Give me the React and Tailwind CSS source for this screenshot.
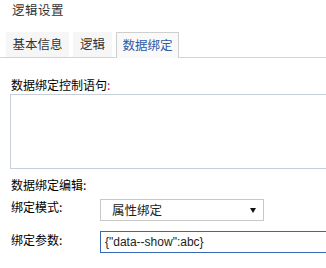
import React from "react";

const cjk = { fontFamily: '"Noto Sans CJK SC", "Noto Sans", sans-serif' };

export default function App() {
  return (
    <div className="w-[326px] h-[268px] bg-white overflow-hidden text-[#222]" style={cjk}>
      <div className="h-[32px] pl-[12px] pt-[1px] text-[12.5px] leading-[18px] text-[#333] tracking-[0.5px]">
        逻辑设置
      </div>
      <div className="flex items-end h-[26px] border-b border-[#d4d4d4] pl-[6px] gap-[4px]">
        <div className="w-[63px] h-[25px] bg-[#f6f6f6] flex items-center justify-center text-[12.5px] text-[#333]">
          基本信息
        </div>
        <div className="w-[39px] h-[25px] bg-[#f6f6f6] flex items-center justify-center text-[12.5px] text-[#333]">
          逻辑
        </div>
        <div className="w-[63px] h-[26px] -mb-px bg-[#f9f9f9] border border-b-0 border-[#cfcfcf] flex items-center justify-center text-[12.5px] text-[#2d5aa6]">
          数据绑定
        </div>
      </div>
      <div className="pl-[10px]">
        <div className="mt-[20px] h-[16px] pl-[1px] text-[12px] leading-[14px] text-black">
          数据绑定控制语句<span className="text-[#c0107a]">:</span>
        </div>
        <div className="w-[330px] h-[75px] border border-[#c9cfd6] bg-white" />
        <div className="mt-[9px] h-[14px] pl-[1px] text-[12px] leading-[14px] text-black">
          数据绑定编辑:
        </div>
        <div className="mt-[7px] flex items-start">
          <div className="w-[90px] shrink-0 pl-[1px] pt-[1px] text-[12px] leading-[14px] text-black">绑定模式:</div>
          <div className="w-[164px] shrink-0 h-[22px] border border-[#c8c8c8] bg-white flex items-center pl-[11px] pr-[7px] text-[12.5px] text-[#222]">
            <span className="flex-1">属性绑定</span>
            <svg width="6" height="5" viewBox="0 0 6 5"><path d="M0 0 L6 0 L3 5 Z" fill="#111" /></svg>
          </div>
        </div>
        <div className="mt-[10px] flex items-start">
          <div className="w-[90px] shrink-0 pl-[1px] pt-[2px] text-[12px] leading-[14px] text-black">绑定参数:</div>
          <div
            className="w-[260px] shrink-0 h-[22px] border border-[#3a67b3] bg-white flex items-center pl-[4px] text-[12px] text-[#222]"
            style={{ fontFamily: '"Liberation Sans", Arial, sans-serif' }}
          >
            {'{"data--show":abc}'}
          </div>
        </div>
      </div>
    </div>
  );
}
